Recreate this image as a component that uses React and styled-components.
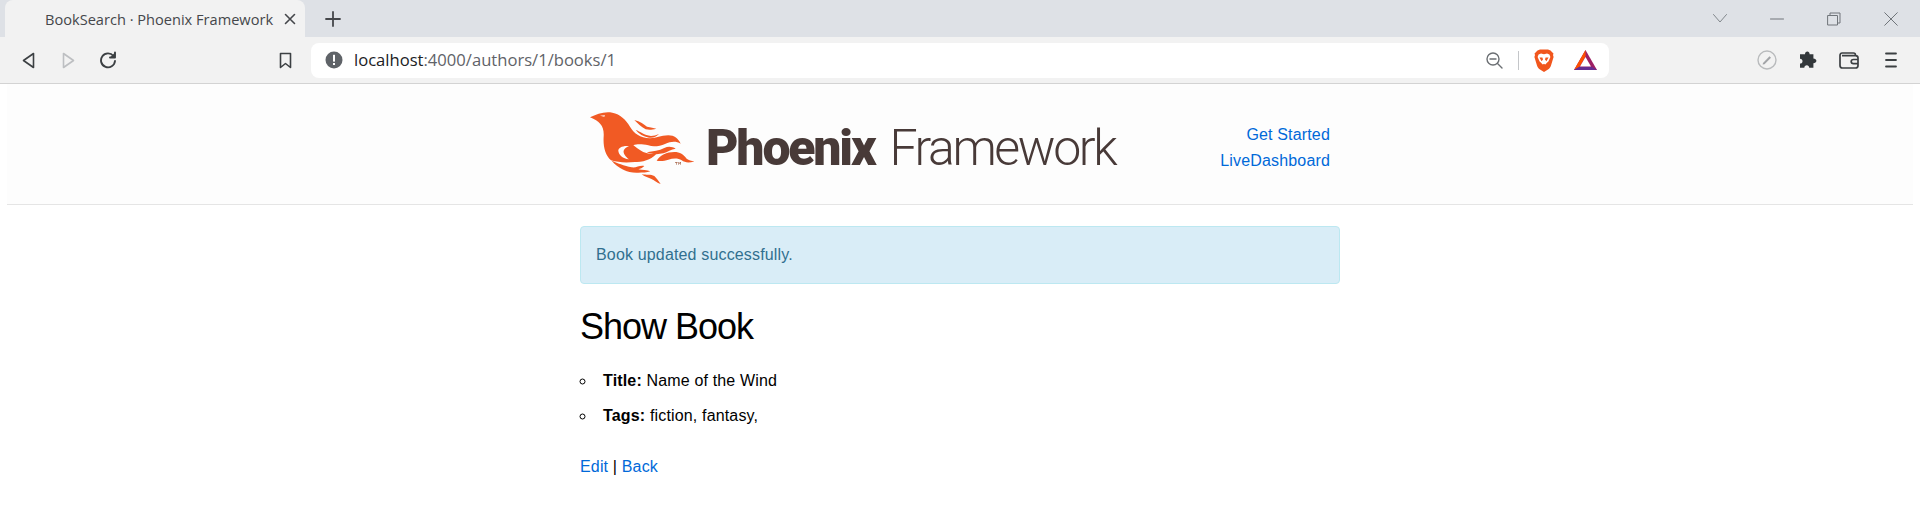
import React from "react";
import styled, { createGlobalStyle } from "styled-components";

const Global = createGlobalStyle`
  html, body { margin: 0; padding: 0; background: #fff; overflow: hidden; }
  body { font-family: "Liberation Sans", Arial, sans-serif; font-size: 16px; letter-spacing: .01em; line-height: 1.6; color: #000; }
`;

const TabStrip = styled.div`
  height: 37px; background: #dee1e6; display: flex; align-items: stretch; padding-left: 5px; position: relative;
`;
const Tab = styled.div`
  width: 300px; box-sizing: border-box; background: #f2f2f2; border-radius: 8px 8px 0 0;
  display: flex; align-items: center; padding: 0 9px 0 40px; justify-content: space-between;
`;
const TabTitle = styled.span`
  font-family: "Open Sans", sans-serif; font-size: 14.6px; letter-spacing: 0; color: #45474b; white-space: nowrap; line-height: 20px;
`;
const NewTab = styled.div`margin-left: 20px; width: 16px; display: flex; align-items: center;`;
const WindowControls = styled.div`
  margin-left: auto; display: flex; align-items: center;
`;
const WinBtn = styled.div`
  width: ${p => p.$w}px; display: flex; justify-content: center; align-items: center;
`;
const Toolbar = styled.div`
  height: 46px; background: #f2f2f2; border-bottom: 1px solid #d3d3d3; display: flex; align-items: center;
`;
const ToolBtn = styled.div`
  width: ${p => p.$w || 40}px; margin-left: ${p => p.$ml || 0}px; display: flex; justify-content: center; align-items: center; flex: none;
`;
const Address = styled.div`
  margin-left: 19px; width: 1298px; height: 35px; background: #fff; border-radius: 8px; display: flex; align-items: center; flex: none;
  padding-left: 14px; box-sizing: border-box;
`;
const Url = styled.div`
  margin-left: 11px; font-family: "Open Sans", sans-serif; font-size: 16.6px; letter-spacing: 0; color: #5f6368; white-space: nowrap; line-height: 22px;
  b { font-weight: 400; color: #202124; }
`;
const AddressEnd = styled.div`margin-left: auto; display: flex; align-items: center; padding-right: 12px;`;
const Sep = styled.div`width: 1px; height: 19px; background: #c4c6c9; margin: 0 15px 0 15px;`;

const Header = styled.header`
  margin: 0 7px; height: 120px; background: #fdfdfd; border-bottom: 1px solid #e5e5e5; display: flex; justify-content: center;
`;
const HeaderInner = styled.div`
  width: 800px; box-sizing: border-box; padding: 28px 30px 0 30px; display: flex; justify-content: space-between;
`;
const Logo = styled.div`display: flex; align-items: flex-start; color: #483a38; font-family: Roboto, sans-serif; white-space: nowrap;`;
const LogoBold = styled.span`font-size: 50px; line-height: 60px; font-weight: 900; letter-spacing: -2.2px; margin-left: 12px; margin-top: 6px;`;
const LogoLight = styled.span`font-size: 50px; line-height: 60px; font-weight: 300; letter-spacing: -2.4px; margin-left: 15px; margin-top: 6px;`;
const Nav = styled.nav`display: flex; flex-direction: column; align-items: flex-end; margin-top: 10px;`;
const Link = styled.a`color: #0069d9; text-decoration: none;`;

const Main = styled.main`width: 760px; margin: 21px auto 0;`;
const Alert = styled.p`
  margin: 0 0 20px; padding: 15px; border: 1px solid #bce8f1; border-radius: 4px; background: #d9edf7; color: #31708f;
`;
const Title = styled.h2`
  margin: 0 0 19px; font-size: 36px; line-height: 1.25; font-weight: 400; letter-spacing: -1px;
`;
const List = styled.ul`margin: 0 0 25px; padding: 0; list-style: circle inside;`;
const Item = styled.li`
  margin-bottom: 10px;
  strong { margin-left: 1px; }
`;
const Actions = styled.div``;

const Stroke = ({ w, h, c = "#5f6368", sw = 1.6, children, vb }) => (
  <svg width={w} height={h} viewBox={vb || `0 0 ${w} ${h}`} fill="none" stroke={c} strokeWidth={sw} strokeLinejoin="round" strokeLinecap="round">{children}</svg>
);

const PhoenixMark = () => (
  <svg width="104" height="72" viewBox="15 22 312 216" fill="#f15a24">
    <path d="M15 38C35 28 60 19 82 24C106 29 122 44 135 66C146 85 165 100 195 101C215 101 226 92 250 92C268 92 280 102 287 117C272 108 258 110 240 118C225 124 205 128 190 122C170 118 155 118 145 122C165 135 175 152 215 146C205 160 180 174 150 172C125 174 100 174 78 167C60 150 54 125 56 95C58 65 45 50 15 38Z" />
    <path d="M132 124C113 122 99 129 100 139C102 151 113 162 132 164C122 156 114 146 116 138C118 131 124 128 132 124Z" fill="#fdfdfd" />
    <path d="M148 46C165 50 178 60 186 66C198 68 205 70 214 72C200 76 192 76 182 74C168 66 158 56 148 46Z" />
    <path d="M152 76C165 80 178 92 198 94C206 94 214 92 222 88C214 96 204 101 192 99C175 96 162 88 152 76Z" />
    <path d="M185 143C205 140 222 138 238 130C250 124 262 126 272 132C258 134 248 142 235 146C218 150 200 149 185 143Z" />
    <path d="M215 168C225 152 245 142 268 142C285 142 296 150 305 162C312 167 320 169 328 170C312 175 300 174 290 167C280 160 265 160 250 165C240 168 228 170 215 168Z" />
    <path d="M270 172h8v2h-3v6h-2v-6h-3zM280 172h2l2 3 2-3h2v8h-2v-5l-2 3-2-3v5h-2z" fill="#a86a50" />
    <path d="M80 168C95 174 118 184 140 188C155 190 165 180 178 184C172 190 166 192 160 194C172 196 186 196 196 200C186 204 172 204 160 204C130 206 100 192 80 168Z" />
    <path d="M170 208C184 212 198 208 208 214C214 220 222 230 227 238C216 234 208 226 198 222C188 218 178 216 170 208Z" />
    <path d="M45 33L60 32L58 36Z" fill="#fff" />
  </svg>
);

const Brave = () => (
  <svg width="20" height="23" viewBox="0 0 20 23">
    <path d="M3.5 1.5L6 0.5H14L16.5 1.5L19.5 4.5L19 6L19.6 8L17 16.5C16.4 18.4 15.6 19.4 14 20.4L10 23L6 20.4C4.4 19.4 3.6 18.4 3 16.5L0.4 8L1 6L0.5 4.5Z" fill="#f1561d" />
    <path d="M10 5.2L7 4.4L4.6 5.4L3.6 8L5.6 12.6L6.8 13.6L8.4 15.2L10 16.2L11.6 15.2L13.2 13.6L14.4 12.6L16.4 8L15.4 5.4L13 4.4Z" fill="#fff" />
    <path d="M5.4 8.4L8.4 8.6L9 10.4L7.6 12.2ZM14.6 8.4L11.6 8.6L11 10.4L12.4 12.2ZM8.4 16L10 14.8L11.6 16L10 17.8Z" fill="#f1561d" />
  </svg>
);
const Bat = () => (
  <svg width="23" height="20" viewBox="0 0 23 20">
    <path d="M11.5 0L23 20H0Z" fill="#9e1f63" />
    <path d="M11.5 0L0 20L5.5 17L11.5 6.5Z" fill="#ff5000" />
    <path d="M0 20H23L17.8 16.8H5.2Z" fill="#662d91" />
    <path d="M11.5 7L17 16.5H6Z" fill="#fff" />
  </svg>
);
const Wallet = () => (
  <svg width="20" height="17" viewBox="0 0 20 17" fill="none" stroke="#3c4043" strokeWidth="1.7" strokeLinejoin="round">
    <path d="M2.5 1H14.5C15.8 1 16.5 1.8 16.5 3.2M1 3.5C1 2 1.8 1 3 1M1 3.5V13.5C1 15 2 16 3.5 16H16.5C18 16 19 15 19 13.5V6C19 4.5 18 3.6 16.5 3.6H3" />
    <path d="M19 7.5H14.5C13 7.5 12.2 8.4 12.2 9.6C12.2 10.8 13 11.7 14.5 11.7H19" />
  </svg>
);

export default function App() {
  return (
    <>
      <Global />
      <TabStrip>
        <Tab>
          <TabTitle>BookSearch · Phoenix Framework</TabTitle>
          <Stroke w={12} h={12} c="#45474b" sw={1.6}><path d="M1.5 1.5L10.5 10.5M10.5 1.5L1.5 10.5" /></Stroke>
        </Tab>
        <NewTab>
          <Stroke w={16} h={16} c="#45474b" sw={1.8}><path d="M8 1V15M1 8H15" /></Stroke>
        </NewTab>
        <WindowControls>
          <WinBtn $w={57}><Stroke w={14} h={9} c="#80868b" sw={1}><path d="M.5 .5L7 8L13.5 .5" /></Stroke></WinBtn>
          <WinBtn $w={57}><Stroke w={14} h={2} c="#70757a" sw={1}><path d="M.5 1H13.5" /></Stroke></WinBtn>
          <WinBtn $w={57}><Stroke w={14} h={14} c="#70757a" sw={1}><path d="M3 3V1H13V11H10.5M1 3.5H10.5V13H1Z" /></Stroke></WinBtn>
          <WinBtn $w={58}><Stroke w={14} h={14} c="#70757a" sw={1}><path d="M.7 .7L13.3 13.3M13.3 .7L.7 13.3" /></Stroke></WinBtn>
        </WindowControls>
      </TabStrip>
      <Toolbar>
        <ToolBtn $w={40} $ml={8}><Stroke w={13} h={17} c="#3c4043"><path d="M11.5 1.5V15.5L1.5 8.5Z" /></Stroke></ToolBtn>
        <ToolBtn $w={40}><Stroke w={13} h={17} c="#bdbfc2"><path d="M1.5 1.5V15.5L11.5 8.5Z" /></Stroke></ToolBtn>
        <ToolBtn $w={40}><Stroke w={18} h={18} c="#3c4043" sw={1.9}><path d="M14.5 5A7 7 0 1 0 16 10" /><path d="M16 1.5V6.5H11" fill="#3c4043" /></Stroke></ToolBtn>
        <ToolBtn $w={14} $ml={150}><Stroke w={13} h={17} c="#3c4043"><path d="M1.5 1.5H11.5V15.5L6.5 11.5L1.5 15.5Z" /></Stroke></ToolBtn>
        <Address>
          <svg width="18" height="18" viewBox="0 0 18 18"><circle cx="9" cy="9" r="8.5" fill="#5f6368" /><rect x="8" y="3.8" width="2" height="6.8" fill="#fff" /><rect x="8" y="12" width="2" height="2" fill="#fff" /></svg>
          <Url><b>localhost</b>:4000/authors/1/books/1</Url>
          <AddressEnd>
            <Stroke w={17} h={17} c="#6b6f73" sw={1.4}><circle cx="7" cy="7" r="6" /><path d="M4 7H10M11.5 11.5L16 16" /></Stroke>
            <Sep />
            <Brave />
            <ToolBtn $w={23} $ml={20}><Bat /></ToolBtn>
          </AddressEnd>
        </Address>
        <ToolBtn $w={20} $ml={148}>
          <svg width="20" height="20" viewBox="0 0 20 20"><circle cx="10" cy="10" r="9" fill="#f2f2f2" stroke="#b9bbbd" strokeWidth="1.4" /><path d="M6 13L12.5 6.2L14 7.7L7.5 14.3L5.6 14.6Z" fill="#a2a4a7" /></svg>
        </ToolBtn>
        <ToolBtn $w={20} $ml={20}>
          <svg width="19" height="19" viewBox="0 0 19 19"><path d="M7 3.2C7 1.6 8 .6 9.3 .6C10.6 .6 11.6 1.6 11.6 3.2H15.4V7.4C17 7.4 18.4 8.3 18.4 9.8C18.4 11.3 17 12.3 15.4 12.3V16.8H11.2C11.2 15.2 10.2 14.3 8.8 14.3C7.4 14.3 6.3 15.2 6.3 16.8H2V12.6C3.6 12.6 4.5 11.6 4.5 10.2C4.5 8.8 3.6 7.8 2 7.8V3.2Z" fill="#33383b" /></svg>
        </ToolBtn>
        <ToolBtn $w={20} $ml={22}><Wallet /></ToolBtn>
        <ToolBtn $w={12} $ml={26}><Stroke w={12} h={16} c="#3c4043" sw={1.8}><path d="M1 1.5H11M1 8H11M1 14.5H11" /></Stroke></ToolBtn>
      </Toolbar>
      <Header>
        <HeaderInner>
          <Logo>
            <PhoenixMark />
            <LogoBold>Phoenix</LogoBold>
            <LogoLight>Framework</LogoLight>
          </Logo>
          <Nav>
            <Link href="#">Get Started</Link>
            <Link href="#">LiveDashboard</Link>
          </Nav>
        </HeaderInner>
      </Header>
      <Main>
        <Alert>Book updated successfully.</Alert>
        <Title>Show Book</Title>
        <List>
          <Item><strong>Title:</strong> Name of the Wind</Item>
          <Item><strong>Tags:</strong> fiction, fantasy,</Item>
        </List>
        <Actions><Link href="#">Edit</Link> | <Link href="#">Back</Link></Actions>
      </Main>
    </>
  );
}
